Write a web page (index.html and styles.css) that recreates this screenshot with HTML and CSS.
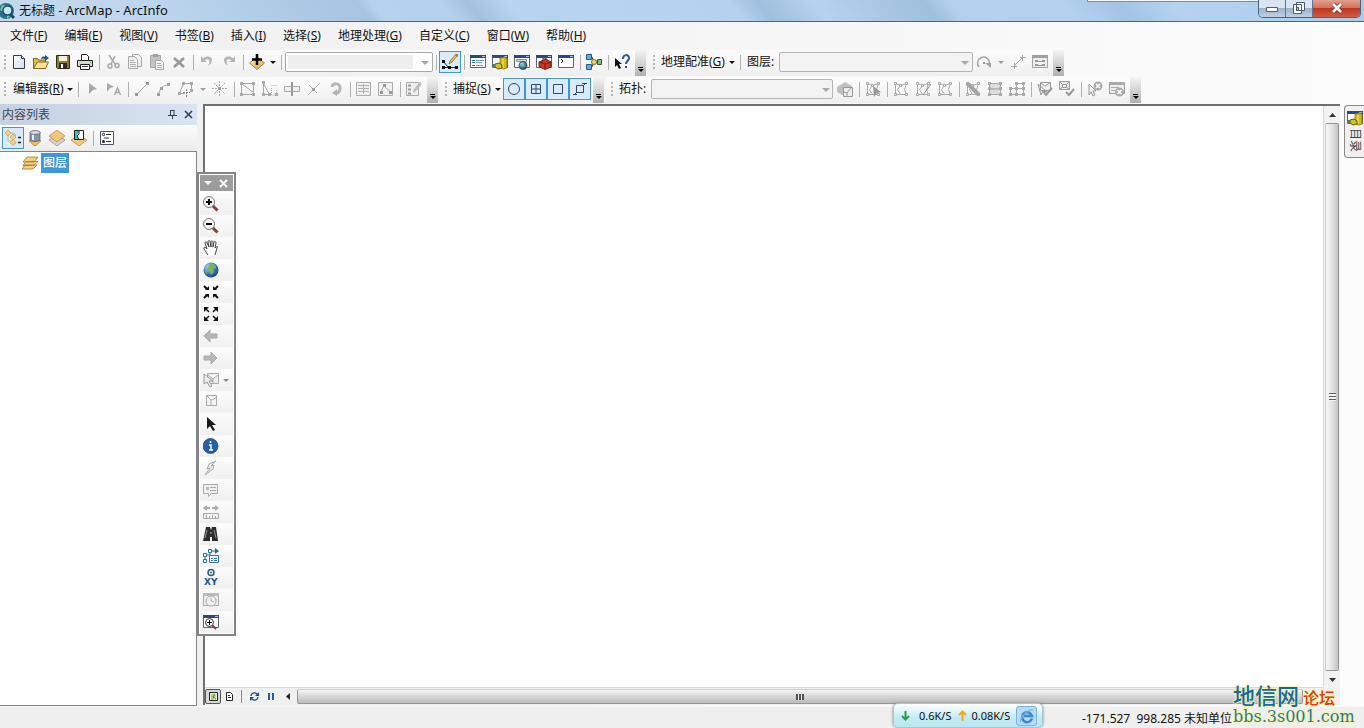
FILE: index.html
```html
<!DOCTYPE html>
<html lang="zh-CN">
<head>
<meta charset="utf-8">
<title>无标题 - ArcMap - ArcInfo</title>
<link rel="stylesheet" href="styles.css">
</head>
<body>
<svg class="sprite" aria-hidden="true">
  <defs>
    <linearGradient id="gold" x1="0" y1="0" x2="1" y2="1"><stop offset="0" stop-color="#fff3c0"/><stop offset="1" stop-color="#d9a040"/></linearGradient>
    <linearGradient id="paper" x1="0" y1="0" x2="1" y2="1"><stop offset="0" stop-color="#fff"/><stop offset="1" stop-color="#cfdcf0"/></linearGradient>
    <radialGradient id="globe" cx=".35" cy=".3" r=".8"><stop offset="0" stop-color="#b8dcf8"/><stop offset=".5" stop-color="#3f82c0"/><stop offset="1" stop-color="#123a70"/></radialGradient>
    <g id="win"><path d="M.5 1.500h15v12H.5z" fill="#fff" stroke="#5a6678"/><path d="M0 1h16v3H0z" fill="#2c4a80"/><path d="M12 2h3v1h-3z" fill="#a8c0e8"/></g>
    <g id="mesh" fill="none" stroke="#a8a8a8"><path d="M2.500 2.500l5 2 6-2M2.500 2.500v11M13.500 2.500l-2 6 2 5M2.500 13.500h11M7.500 4.500l-3 4 3 5"/><path d="M1.500 1.500h2v2h-2zM6.500 3.500h2v2h-2zM12.500 1.500h2v2h-2zM1.500 12.500h2v2h-2zM12.500 12.500h2v2h-2z" fill="#eee"/></g>
  </defs>
  <symbol id="new" viewBox="0 0 16 16"><path d="M2.500 1.500h8l3 3v10h-11z" fill="url(#paper)" stroke="#333a4c"/><path d="M10.500 1.500v3h3" fill="#fff" stroke="#333a4c"/></symbol>
  <symbol id="open" viewBox="0 0 16 16"><path d="M.5 14.500v-10h4l1 1.500h7v8.500z" fill="#e0b850" stroke="#86651c"/><path d="M.5 14.500l4-6.500h11l-3 6.500z" fill="#ffe592" stroke="#86651c"/><path d="M8 5c1-3 3-2.500 4-2V1l4 3-4 3V5c-1-.5-2-1-4 0z" fill="#1c5290"/></symbol>
  <symbol id="save" viewBox="0 0 16 16"><path d="M1.500 1.500h13v13h-12l-1-1z" fill="#8d7b36" stroke="#302b16"/><path d="M4 2h8v5H4z" fill="#f4f1dc"/><path d="M4 9h8v5H4z" fill="#2b2b2b"/><path d="M6 10h2v4H6z" fill="#fff"/></symbol>
  <symbol id="print" viewBox="0 0 16 16"><path d="M4.500 6.500v-6h5l2 2v4" fill="#fff" stroke="#222"/><path d="M.5 6.500h15v6H.5z" fill="#d6d9d2" stroke="#222"/><path d="M3.500 10.500h9v5h-9z" fill="#fff" stroke="#222"/><path d="M5 12h6v1H5z" fill="#444"/><path d="M13 8h1v1h-1z" fill="#4a4"/></symbol>
  <symbol id="cut" viewBox="0 0 16 16"><path d="M4 1l6 9M10 2l-4 8" stroke="#a8a8a8" stroke-width="1.500"/><circle cx="5" cy="12" r="2" fill="none" stroke="#a8a8a8" stroke-width="1.500"/><circle cx="12" cy="11.500" r="2" fill="none" stroke="#a8a8a8" stroke-width="1.500"/></symbol>
  <symbol id="copy" viewBox="0 0 16 16"><path d="M5.500.5h6l3 3v9h-9z" fill="#f1f1f1" stroke="#a8a8a8"/><path d="M1.500 2.500h6l3 3v9h-9z" fill="#f1f1f1" stroke="#a8a8a8"/><path d="M3 6.500h4M3 8.500h6M3 10.500h6M3 12.500h6" stroke="#b2b2b2"/></symbol>
  <symbol id="paste" viewBox="0 0 16 16"><path d="M1.500 1.500h10v12h-10z" fill="#c4c4c4" stroke="#a5a5a5"/><path d="M4 0h5v3H4z" fill="#a0a0a0"/><path d="M6.500 6.500h6l2 2v7h-8z" fill="#f4f4f4" stroke="#a5a5a5"/><path d="M8 9.500h4M8 11.500h5M8 13.500h5" stroke="#aaa"/></symbol>
  <symbol id="del" viewBox="0 0 16 16"><path d="M3 4l10 9M13 4l-10 9" stroke="#979797" stroke-width="2.500"/></symbol>
  <symbol id="undo" viewBox="0 0 16 16"><path d="M2 2v6h6L5.500 6C10 4 12 6 9 12c6-4 5-10-1-9.500C6 2.600 5 3.500 4 4.500z" fill="#b4b4b4"/></symbol>
  <symbol id="redo" viewBox="0 0 16 16"><path d="M14 2v6H8l2.500-2C6 4 4 6 7 12 1 8 2 2 8 2.500c2 .1 3 1 4 2z" fill="#b4b4b4"/></symbol>
  <symbol id="add" viewBox="0 0 16 16"><path d="M8 3l7.500 6L8 15.500.5 9z" fill="url(#gold)" stroke="#b08038"/><path d="M8 0v11M3 5.500h10" stroke="#000" stroke-width="2.500"/></symbol>
  <symbol id="edit" viewBox="0 0 16 16"><path d="M1 7l5 6M1 13.500h14" stroke="#222" fill="none"/><path d="M0 6h3v3H0zM0 12h3v3H0zM6 12h3v3H6zM13 12h3v3h-3z" fill="#111"/><path d="M7 10l1-3 6-7 2 1-6 7z" fill="#e9c259" stroke="#5b4a20" stroke-width=".6"/><path d="M13 1l2-1 1 2-1 1z" fill="#c85848"/></symbol>
  <symbol id="toc" viewBox="0 0 16 16"><use href="#win"/><path d="M2 6.500h3M2 8.500h3M2 11.500h3" stroke="#2c7aa0"/><path d="M6 6.500h8M6 8.500h6M6 11.500h7" stroke="#6a9bd0"/></symbol>
  <symbol id="catalog" viewBox="0 0 16 16"><use href="#win"/><path d="M8 4l4-1 3 1v10l-3 1-4-1z" fill="#d4b81e" stroke="#776400" stroke-width=".7"/><path d="M11 5v9" stroke="#fff07a"/><path d="M3 10l4-1 3 2v3l-4 1-3-2z" fill="#cfc13a" stroke="#5d5a10"/><path d="M1 10h2v4H1z" fill="#4b8058"/></symbol>
  <symbol id="search" viewBox="0 0 16 16"><use href="#win"/><path d="M2.500 5.500h10v2h-10z" fill="#d6dce8" stroke="#8090a8"/><circle cx="9" cy="11.500" r="4" fill="url(#globe)" stroke="#456"/><path d="M7 10l3 0 1 3-3-1z" fill="#78c070"/></symbol>
  <symbol id="toolbox" viewBox="0 0 16 16"><use href="#win"/><path d="M3 8l7-3 5 3v5l-6 2.500-6-3z" fill="#c53829" stroke="#781a14"/><path d="M3 8l6 2 6-2M9 10v5" stroke="#781a14" fill="none"/><path d="M7 6V4h3v2" stroke="#444" fill="none"/></symbol>
  <symbol id="python" viewBox="0 0 16 16"><use href="#win"/><path d="M3 5l2 2-2 2" fill="none" stroke="#111"/></symbol>
  <symbol id="model" viewBox="0 0 16 16"><path d="M4 3h2l2 5h4M4 13h2l2-5" stroke="#333" fill="none"/><path d="M.5.500h5v5h-5zM.5 10.500h5v5h-5z" fill="#5caee0" stroke="#1d5c8c"/><circle cx="8" cy="8" r="2.500" fill="#f2d860" stroke="#80701a"/><path d="M11.500 5.500h4v5h-4z" fill="#75c678" stroke="#285c2c"/></symbol>
  <symbol id="help" viewBox="0 0 16 16"><path d="M1 4v9l2-2 2 4 2-1-2-4h3z" fill="#111"/><path d="M9 5c0-5 6-5 6-1 0 3-3 3-3 6M12 12v2" fill="none" stroke="#2d5b92" stroke-width="2"/></symbol>
  <symbol id="rotate" viewBox="0 0 16 16"><path d="M3 13A6 6 0 1 1 13.500 9" fill="none" stroke="#a8a8a8" stroke-width="1.500"/><path d="M9 9h6v5z" fill="#a0a0a0"/><path d="M7 8h2v2H7z" fill="#999"/></symbol>
  <symbol id="link" viewBox="0 0 16 16"><path d="M4 12l8-8M1 12.500h6M4.500 9v6M10 3.500h6M12.500 1v6" stroke="#a6a6a6" fill="none"/></symbol>
  <symbol id="linktable" viewBox="0 0 16 16"><path d="M.5 1.500h15v12H.5z" fill="#eee" stroke="#a0a0a0"/><path d="M0 1h16v3H0z" fill="#a0a0a0"/><path d="M3 6h3v2H3zM3 10h3v2H3zM10 6h3v2h-3zM10 10h3v2h-3zM6 7h4v1H6zM6 11h4v1H6z" fill="#999"/></symbol>
  <symbol id="play" viewBox="0 0 16 16"><path d="M5 2l8 6-4 1-4 4z" fill="#a8a8a8"/></symbol>
  <symbol id="playa" viewBox="0 0 16 16"><path d="M1 2l7 4-4 1-3 4z" fill="#a8a8a8"/><path d="M8.500 14l3-7 3 7M9.500 11.500h4" fill="none" stroke="#a8a8a8" stroke-width="1.500"/></symbol>
  <symbol id="line" viewBox="0 0 16 16"><path d="M3 13l10-10" stroke="#a8a8a8"/><path d="M1 12h3v3H1zM12 1h3v3h-3z" fill="#999"/></symbol>
  <symbol id="arc" viewBox="0 0 16 16"><path d="M3 13c0-5 4-9 9-9" stroke="#a8a8a8" fill="none"/><path d="M1 12h3v3H1zM4 6h3v3H4zM11 2h3v3h-3z" fill="#a0a0a0"/></symbol>
  <symbol id="poly" viewBox="0 0 16 16"><path d="M7 12.500H1.500L5.500 2.500h8v6" stroke="#a8a8a8" fill="none"/><path d="M4 1h3v3H4zM12 1h3v3h-3zM12 8h3v3h-3zM0 11h3v3H0z" fill="#a8a8a8"/><path d="M8.500 8v8M5 11.500h7" stroke="#888" stroke-dasharray="2 1"/></symbol>
  <symbol id="burst" viewBox="0 0 16 16"><path d="M7.500 0v5M7.500 10v5M0 7.500h5M10 7.500h5M2 2l4 4M9 9l4 4M13 2L9 6M6 9l-4 4" stroke="#aaa" stroke-dasharray="2 1"/><path d="M6 6h3v3H6z" fill="#999"/></symbol>
  <symbol id="vert" viewBox="0 0 16 16"><path d="M1.500 13.500v-11l12 9v2zM1.500 2.500h12v9" stroke="#a8a8a8" fill="none"/><path d="M0 1h3v3H0zM12 1h3v3h-3zM0 12h3v3H0zM12 12h3v3h-3z" fill="#aaa"/></symbol>
  <symbol id="reshape" viewBox="0 0 16 16"><path d="M1.500 1.500v12h6l-6-11" stroke="#a8a8a8" fill="none"/><path d="M9.500 4.500h5M9.500 7v7h5v-5" stroke="#b0b0b0" fill="none" stroke-dasharray="1 1"/><path d="M0 0h3v3H0zM0 12h3v3H0zM6 12h3v3H6zM13 12h3v3h-3z" fill="#aaa"/></symbol>
  <symbol id="cutpoly" viewBox="0 0 16 16"><path d="M.5 5.500h15v5H.5z" fill="#eee" stroke="#aaa"/><path d="M8 1v14" stroke="#999" stroke-width="2"/></symbol>
  <symbol id="split" viewBox="0 0 16 16"><path d="M2 14L14 2M3 4l8 8" stroke="#aaa"/><path d="M6 7h3v3H6z" fill="#999"/></symbol>
  <symbol id="rot2" viewBox="0 0 16 16"><path d="M4 6c1-5 9-4 8 2-.5 3-2 4-4 4" fill="none" stroke="#b4b4b4" stroke-width="3"/><path d="M9 8v7l-5-3z" fill="#b4b4b4"/></symbol>
  <symbol id="attr" viewBox="0 0 16 16"><path d="M.5 1.500h14v13H.5z" fill="#f0f0f0" stroke="#aaa"/><path d="M2 4.500h11M2 7.500h11M2 10.500h11M7.500 3v10" stroke="#b0b0b0"/></symbol>
  <symbol id="sketch" viewBox="0 0 16 16"><path d="M.5 1.500h14v13H.5z" fill="#f0f0f0" stroke="#aaa"/><path d="M3 11l3-7 3 4 4 3" fill="none" stroke="#aaa"/><path d="M5 3h3v3H5zM2 10h3v3H2zM11 10h3v3h-3z" fill="#999"/></symbol>
  <symbol id="create" viewBox="0 0 16 16"><path d="M.5 1.500h12v13H.5z" fill="#f0f0f0" stroke="#aaa"/><path d="M2 4.500h3M2 8.500h3M2 12.500h3" stroke="#999" stroke-width="2"/><path d="M7 12l1-4 6-7 2 2-6 7z" fill="#bbb"/></symbol>
  <symbol id="circle" viewBox="0 0 16 16"><circle cx="8" cy="8" r="5.500" fill="none" stroke="#2d4868"/></symbol>
  <symbol id="end" viewBox="0 0 16 16"><path d="M3.500 3.500h9v9h-9zM8 4v8M4 8h8" fill="none" stroke="#2d4868"/></symbol>
  <symbol id="square" viewBox="0 0 16 16"><path d="M3.500 3.500h9v9h-9z" fill="none" stroke="#2d4868"/></symbol>
  <symbol id="edge" viewBox="0 0 16 16"><path d="M4.500 4.500h7v7h-7zM11 5l3-3M2 14l3-3M1 13.500h4M10 2.500h5" fill="none" stroke="#2d4868"/></symbol>
  <symbol id="cube" viewBox="0 0 16 16"><path d="M0 6l8-5 7 4v9H5l-5-3z" fill="#c0c0c0"/><path d="M6.500 6.500h9v9h-9z" fill="#eee" stroke="#999"/><path d="M7 11l3 1 4-5M10 12v3" stroke="#999" fill="none"/></symbol>
  <symbol id="tselect" viewBox="0 0 16 16"><use href="#mesh"/><path d="M8 5l8 6-4 1-3 4z" fill="#999"/></symbol>
  <symbol id="tmod" viewBox="0 0 16 16"><use href="#mesh"/></symbol>
  <symbol id="tshape" viewBox="0 0 16 16"><use href="#mesh"/><path d="M8 14l8-11" stroke="#888"/></symbol>
  <symbol id="tfix" viewBox="0 0 16 16"><use href="#mesh"/><path d="M2 2l12 12" stroke="#a5a5a5" stroke-width="4"/></symbol>
  <symbol id="trect" viewBox="0 0 16 16"><path d="M2.500 2.500h11v11h-11z" fill="#ddd" stroke="#aaa"/><path d="M2 8h12" stroke="#999"/><path d="M1 1h3v3H1zM12 1h3v3h-3zM1 12h3v3H1zM12 12h3v3h-3zM1 6h3v3H1zM12 6h3v3h-3z" fill="#aaa"/></symbol>
  <symbol id="tgrid" viewBox="0 0 16 16"><path d="M1.500 7.500h13v6h-13zM7.500 14V2.500h7V14" fill="none" stroke="#aaa"/><path d="M0 6h3v3H0zM6 6h3v3H6zM13 6h3v3h-3zM0 12h3v3H0zM6 12h3v3H6zM13 12h3v3h-3zM6 1h3v3H6zM13 1h3v3h-3z" fill="#aaa"/></symbol>
  <symbol id="tcheck" viewBox="0 0 16 16"><path d="M3.500 1.500h10v8h-10zM4 2l4 3 5-3M1 3l3 11 2-4 4 1z" fill="#eee" stroke="#999"/><path d="M6 10l3 4 6-7" fill="none" stroke="#999" stroke-width="2"/></symbol>
  <symbol id="tcheck2" viewBox="0 0 16 16"><path d="M.5.500h10v8H.5z" fill="#eee" stroke="#999"/><path d="M3.500 3.500h4v3h-4zM1 1l3 3M10 1L7 4M10 8L7 6M1 8l3-2" fill="none" stroke="#999"/><path d="M7 11l3 3 5-6" fill="none" stroke="#999" stroke-width="2"/></symbol>
  <symbol id="terr" viewBox="0 0 16 16"><path d="M2 3v11l2-3 2 4 2-1-2-4h3z" fill="#eee" stroke="#999"/><circle cx="11" cy="5" r="4.500" fill="#aaa"/><path d="M9 3l4 4M13 3L9 7" stroke="#fff" stroke-width="1.500"/></symbol>
  <symbol id="tinsp" viewBox="0 0 16 16"><path d="M.5 1.500h15v11H.5z" fill="#eee" stroke="#999"/><path d="M0 1h16v3H0z" fill="#aaa"/><path d="M2 6.500h8M2 9.500h4" stroke="#aaa"/><circle cx="10.500" cy="11" r="4.500" fill="#aaa"/><path d="M8.500 9l4 4M12.500 9l-4 4" stroke="#fff" stroke-width="1.500"/></symbol>
  <symbol id="draworder" viewBox="0 0 16 16"><path d="M3 5v6h3M5 3h4l2 3M8 7v6h3" stroke="#b8b8b8" fill="none"/><path d="M3 0l3 3-3 3-3-3zM8 4l3 3-3 3-3-3zM8 9.500l3 3-3 3-3-3z" fill="#f5cf82" stroke="#c89540" stroke-width=".7"/><path d="M13 7.500h3M13 12.500h3" stroke="#222" stroke-width="1.500"/></symbol>
  <symbol id="source" viewBox="0 0 16 16"><path d="M8 8l6 3-6 5-6-5z" fill="#ecc260" stroke="#b88a38"/><path d="M3 2v8c2 2 8 2 10 0V2z" fill="#8794a8" stroke="#4c566a" stroke-width=".7"/><path d="M5 3v7h2V3z" fill="#e9eef8"/><ellipse cx="8" cy="2.500" rx="5" ry="2" fill="#d4dcea" stroke="#4c566a" stroke-width=".7"/></symbol>
  <symbol id="visible" viewBox="0 0 16 16"><path d="M8 5l8 5-8 6-8-6z" fill="#d4d4d4" stroke="#888" stroke-width=".7"/><path d="M8 0l8 6-8 6-8-6z" fill="#f2c878" stroke="#b08038" stroke-width=".7"/></symbol>
  <symbol id="selection" viewBox="0 0 16 16"><path d="M8 5l8 5-8 6-8-6z" fill="#f2c878" stroke="#b08038" stroke-width=".7"/><path d="M3.500.5h9v9h-9z" fill="#35bdd2" stroke="#222"/><path d="M8 1h4v8H8l-2-3z" fill="#fff"/><path d="M8 1v3L6 6l2 3" fill="none" stroke="#222"/></symbol>
  <symbol id="options" viewBox="0 0 16 16"><path d="M1.500 1.500h13v13h-13z" fill="#fff" stroke="#4b5265"/><circle cx="4.500" cy="4.500" r="1.200" fill="none" stroke="#222"/><circle cx="4.500" cy="11.500" r="1.500" fill="#223"/><path d="M7 4.500h5M7 11.500h5M5 8h5" stroke="#333"/></symbol>
  <symbol id="layers" viewBox="0 0 16 16"><path d="M0 14l3-4h12l-4 4zM1 10.500l3-4h12l-4 4zM1 7l4-5h11l-4 5z" fill="#f3cf7e" stroke="#a27830" stroke-width=".8"/></symbol>
  <symbol id="zin" viewBox="0 0 16 16"><path d="M9.500 9.500l5 5" stroke="#84403c" stroke-width="3"/><circle cx="6" cy="6" r="5.500" fill="#f4f6fa" stroke="#777"/><path d="M6 3v6M3 6h6" stroke="#000" stroke-width="2"/></symbol>
  <symbol id="zout" viewBox="0 0 16 16"><path d="M9.500 9.500l5 5" stroke="#84403c" stroke-width="3"/><circle cx="6" cy="6" r="5.500" fill="#f4f6fa" stroke="#777"/><path d="M3 6h6" stroke="#000" stroke-width="2"/></symbol>
  <symbol id="pan" viewBox="0 0 16 16"><path d="M5 15L1 9c-1-2 1-2 2-1l1 1L2 3c0-1 2-2 2 0l2 4-1-5c0-2 2-2 2 0l1 5V2c0-2 2-1 2 0v5l1-5c0-1 2-1 2 1l-1 5c2-2 3-2 2 0l-2 7" fill="#fff" stroke="#333" stroke-width=".9"/></symbol>
  <symbol id="full" viewBox="0 0 16 16"><circle cx="8" cy="8" r="7.500" fill="url(#globe)"/><path d="M7 2c3-1 6 1 6 4l-3 1 1 3-3 3-1-4-3-2zM2 8l2 1v3c-1-1-2-2-2-4z" fill="#7db35d"/></symbol>
  <symbol id="fzi" viewBox="0 0 16 16"><path d="M1 2l3 3M15 2l-3 3M1 14l3-3M15 14l-3-3" stroke="#111" stroke-width="2"/><path d="M6 2v4H2zM10 2v4h4zM6 14v-4H2zM10 14v-4h4z" fill="#111"/></symbol>
  <symbol id="fzo" viewBox="0 0 16 16"><path d="M2 2l4 4M14 2l-4 4M2 14l4-4M14 14l-4-4" stroke="#111" stroke-width="1.500"/><path d="M1 1h5L1 6zM15 1h-5l5 5zM1 15h5l-5-5zM15 15h-5l5-5z" fill="#111"/></symbol>
  <symbol id="back" viewBox="0 0 16 16"><path d="M1 8l6-6v4h7v4H7v4z" fill="#b8b8b8" stroke="#aaa"/></symbol>
  <symbol id="fwd" viewBox="0 0 16 16"><path d="M14 8L8 2v4H1v4h7v4z" fill="#b8b8b8" stroke="#aaa"/></symbol>
  <symbol id="selfeat" viewBox="0 0 16 16"><path d="M4.500 1.500h11v10h-11zM5 3l5 4 5-4M10 7v5" fill="#eee" stroke="#aaa"/><path d="M1 2v10l3-2 3 5 2-1-3-5h4z" fill="#eee" stroke="#999"/></symbol>
  <symbol id="clear" viewBox="0 0 16 16"><path d="M3.500 1.500h10v10h-10zM4 2l4 4 5-2M8 6v5" fill="#f2f2f2" stroke="#aaa"/></symbol>
  <symbol id="pointer" viewBox="0 0 16 16"><path d="M4 1v12l3-3 3 5 2-1-3-5h4z" fill="#181818"/></symbol>
  <symbol id="info" viewBox="0 0 16 16"><circle cx="7.500" cy="8" r="7.500" fill="#2460a4" stroke="#164078" stroke-width=".7"/><path d="M7.500 3v2M6 7h2v5M6 12h4" stroke="#fff" stroke-width="1.500" fill="none"/></symbol>
  <symbol id="bolt" viewBox="0 0 16 16"><path d="M13 1L6 4 4 9l3-1-5 7 8-6 1-4-3 1z" fill="#e8e8e8" stroke="#aaa"/></symbol>
  <symbol id="html" viewBox="0 0 16 16"><path d="M.5 2.500h14v9h-6l-3 3v-3h-5z" fill="#f0f0f0" stroke="#aaa"/><path d="M3 5h3v3H3z" fill="#bbb"/><path d="M7 5.500h6M7 8.500h6" stroke="#aaa"/></symbol>
  <symbol id="measure" viewBox="0 0 16 16"><path d="M0 4l4-3v2h3v2H4v2zM16 4l-4-3v2H9v2h3v2z" fill="#aaa"/><path d="M.5 9.500h15v5H.5z" fill="#f2f2f2" stroke="#aaa"/><path d="M3.500 11v3M6.500 12v2M9.500 11v3M12.500 12v2" stroke="#aaa"/></symbol>
  <symbol id="find" viewBox="0 0 16 16"><path d="M3 1h4l1 3 1-3h4l2 14H9v-4H7v4H0z" fill="#2c2c2c"/><path d="M4 4L2 12M11 4l2 8" stroke="#999"/><path d="M7 6h2v2H7z" fill="#777"/></symbol>
  <symbol id="route" viewBox="0 0 16 16"><path d="M2 13V7h5V3h6" fill="none" stroke="#246b94"/><path d="M12 0l4 3-4 3z" fill="#246b94"/><path d="M.5 5.500h3v3h-3zM5.500 1.500h3v3h-3zM.5 11.500h3v3h-3z" fill="#fff" stroke="#246b94"/><path d="M6.500 7.500h9v7h-9z" fill="#eef7fa" stroke="#37768f"/><path d="M8 10.500h2M11 10.500h3M8 12.500h2M11 12.500h3" stroke="#37768f"/></symbol>
  <symbol id="xy" viewBox="0 0 16 16"><circle cx="8" cy="3.500" r="3" fill="#fff" stroke="#22598c" stroke-width="1.500"/><circle cx="8" cy="3.500" r="1" fill="#22598c"/></symbol>
  <symbol id="time" viewBox="0 0 16 16"><path d="M.5 1.500h15v12H.5z" fill="#eee" stroke="#aaa"/><path d="M0 1h16v3H0z" fill="#bbb"/><circle cx="8" cy="9" r="5" fill="#f2f2f2" stroke="#aaa"/><path d="M8 6v3l3 1" fill="none" stroke="#aaa"/></symbol>
  <symbol id="viewer" viewBox="0 0 16 16"><use href="#win"/><path d="M9 11l4 4" stroke="#84403c" stroke-width="2"/><circle cx="6.500" cy="8.500" r="4" fill="#fff" stroke="#333"/><path d="M6.500 6v5M4 8.500h5" stroke="#111"/></symbol>
  <symbol id="app" viewBox="0 0 16 16"><circle cx="6" cy="8" r="8" fill="#28728a"/><path d="M2 2l5 1 1 4-4 2-4-2zM7 11l3 2-3 3z" fill="#7ac6a0"/><path d="M10 11l4 4" stroke="#26485c" stroke-width="3"/><circle cx="7.500" cy="7.500" r="4.500" fill="#c0ebf5" stroke="#264b66" stroke-width="1.500"/></symbol>
</svg>

<header class="titlebar">
  <svg class="icon"><use href="#app"/></svg>
  <h1 class="titlebar__text">无标题 <span class="titlebar__app">- ArcMap - ArcInfo</span></h1>
  <div class="titlebar__tab"></div>
  <div class="winctl">
    <button class="winctl__btn" aria-label="最小化"><svg class="winctl__icon" viewBox="0 0 14 12"><path d="M1.500 5.500h11v4h-11z" fill="#fff" stroke="#555e70"/></svg></button>
    <button class="winctl__btn" aria-label="还原"><svg class="winctl__icon" viewBox="0 0 14 12"><path d="M4.500.5h8v8h-8zM1.500 2.500h8v9h-8z" fill="#fff" stroke="#4d586b"/><path d="M4.500 5.500h2v3h-2z" fill="#a9bdd4" stroke="#4d586b"/></svg></button>
    <button class="winctl__btn winctl__btn--close" aria-label="关闭"><svg class="winctl__icon" viewBox="0 0 14 12"><path d="M3 2l8 8M11 2l-8 8" stroke="#6b3630" stroke-width="4.500"/><path d="M3 2l8 8M11 2l-8 8" stroke="#fff" stroke-width="2.800"/></svg></button>
  </div>
</header>

<nav class="menubar">
  <button class="menubar__item">文件(<u>F</u>)</button>
  <button class="menubar__item">编辑(<u>E</u>)</button>
  <button class="menubar__item">视图(<u>V</u>)</button>
  <button class="menubar__item">书签(<u>B</u>)</button>
  <button class="menubar__item">插入(<u>I</u>)</button>
  <button class="menubar__item">选择(<u>S</u>)</button>
  <button class="menubar__item">地理处理(<u>G</u>)</button>
  <button class="menubar__item">自定义(<u>C</u>)</button>
  <button class="menubar__item">窗口(<u>W</u>)</button>
  <button class="menubar__item">帮助(<u>H</u>)</button>
</nav>

<div class="toolrow">
  <div class="toolbar" role="toolbar" aria-label="标准工具">
    <span class="grip"></span>
    <button class="tool" aria-label="新建"><svg class="icon"><use href="#new"/></svg></button>
    <button class="tool" aria-label="打开"><svg class="icon"><use href="#open"/></svg></button>
    <button class="tool" aria-label="保存"><svg class="icon"><use href="#save"/></svg></button>
    <button class="tool" aria-label="打印"><svg class="icon"><use href="#print"/></svg></button>
    <span class="sep"></span>
    <button class="tool" aria-label="剪切"><svg class="icon"><use href="#cut"/></svg></button>
    <button class="tool" aria-label="复制"><svg class="icon"><use href="#copy"/></svg></button>
    <button class="tool" aria-label="粘贴"><svg class="icon"><use href="#paste"/></svg></button>
    <button class="tool" aria-label="删除"><svg class="icon"><use href="#del"/></svg></button>
    <span class="sep"></span>
    <button class="tool" aria-label="撤消"><svg class="icon"><use href="#undo"/></svg></button>
    <button class="tool" aria-label="恢复"><svg class="icon"><use href="#redo"/></svg></button>
    <span class="sep"></span>
    <button class="tool" aria-label="添加数据"><svg class="icon"><use href="#add"/></svg></button>
    <button class="drop" aria-label="添加数据选项"></button>
    <span class="sep"></span>
    <span class="combo combo--scale"><select class="combo__select" aria-label="比例尺"></select></span>
    <span class="sep"></span>
    <button class="tool tool--on" aria-label="编辑器工具条"><svg class="icon"><use href="#edit"/></svg></button>
    <span class="sep"></span>
    <button class="tool" aria-label="内容列表窗口"><svg class="icon"><use href="#toc"/></svg></button>
    <button class="tool" aria-label="目录窗口"><svg class="icon"><use href="#catalog"/></svg></button>
    <button class="tool" aria-label="搜索窗口"><svg class="icon"><use href="#search"/></svg></button>
    <button class="tool" aria-label="工具箱窗口"><svg class="icon"><use href="#toolbox"/></svg></button>
    <button class="tool" aria-label="Python 窗口"><svg class="icon"><use href="#python"/></svg></button>
    <span class="sep"></span>
    <button class="tool" aria-label="模型构建器"><svg class="icon"><use href="#model"/></svg></button>
    <span class="sep"></span>
    <button class="tool" aria-label="这是什么"><svg class="icon"><use href="#help"/></svg></button>
    <button class="overflow" aria-label="工具条选项"></button>
  </div>
  <div class="toolbar" role="toolbar" aria-label="地理配准">
    <span class="grip"></span>
    <button class="textbtn textbtn--georef">地理配准(<u>G</u>)</button>
    <span class="drop"></span>
    <span class="sep"></span>
    <label class="caption" for="georef-layer">图层:</label>
    <span class="combo combo--layer"><select class="combo__select" id="georef-layer" disabled></select></span>
    <button class="tool" aria-label="旋转"><svg class="icon"><use href="#rotate"/></svg></button>
    <button class="drop drop--off" aria-label="旋转选项"></button>
    <button class="tool" aria-label="添加控制点"><svg class="icon"><use href="#link"/></svg></button>
    <button class="tool" aria-label="查看链接表"><svg class="icon"><use href="#linktable"/></svg></button>
    <button class="overflow" aria-label="工具条选项"></button>
  </div>
</div>

<div class="toolrow">
  <div class="toolbar" role="toolbar" aria-label="编辑器">
    <span class="grip"></span>
    <button class="textbtn textbtn--editor">编辑器(<u>R</u>)</button>
    <span class="drop"></span>
    <span class="sep"></span>
    <button class="tool" aria-label="编辑工具"><svg class="icon"><use href="#play"/></svg></button>
    <button class="tool" aria-label="编辑注记"><svg class="icon"><use href="#playa"/></svg></button>
    <span class="sep"></span>
    <button class="tool" aria-label="直线段"><svg class="icon"><use href="#line"/></svg></button>
    <button class="tool" aria-label="弧段"><svg class="icon"><use href="#arc"/></svg></button>
    <button class="tool" aria-label="追踪"><svg class="icon"><use href="#poly"/></svg></button>
    <button class="drop drop--off" aria-label="追踪选项"></button>
    <button class="tool" aria-label="点"><svg class="icon"><use href="#burst"/></svg></button>
    <span class="sep"></span>
    <button class="tool" aria-label="编辑折点"><svg class="icon"><use href="#vert"/></svg></button>
    <button class="tool" aria-label="整形要素"><svg class="icon"><use href="#reshape"/></svg></button>
    <button class="tool" aria-label="裁剪面"><svg class="icon"><use href="#cutpoly"/></svg></button>
    <button class="tool" aria-label="分割"><svg class="icon"><use href="#split"/></svg></button>
    <button class="tool" aria-label="旋转要素"><svg class="icon"><use href="#rot2"/></svg></button>
    <span class="sep"></span>
    <button class="tool" aria-label="属性"><svg class="icon"><use href="#attr"/></svg></button>
    <button class="tool" aria-label="草图属性"><svg class="icon"><use href="#sketch"/></svg></button>
    <span class="sep"></span>
    <button class="tool" aria-label="创建要素"><svg class="icon"><use href="#create"/></svg></button>
    <button class="overflow" aria-label="工具条选项"></button>
  </div>
  <div class="toolbar" role="toolbar" aria-label="捕捉">
    <span class="grip"></span>
    <button class="textbtn textbtn--snap">捕捉(<u>S</u>)</button>
    <span class="drop"></span>
    <button class="tool tool--on" aria-label="点捕捉"><svg class="icon"><use href="#circle"/></svg></button>
    <button class="tool tool--on" aria-label="端点捕捉"><svg class="icon"><use href="#end"/></svg></button>
    <button class="tool tool--on" aria-label="折点捕捉"><svg class="icon"><use href="#square"/></svg></button>
    <button class="tool tool--on" aria-label="边捕捉"><svg class="icon"><use href="#edge"/></svg></button>
    <button class="overflow" aria-label="工具条选项"></button>
  </div>
  <div class="toolbar" role="toolbar" aria-label="拓扑">
    <span class="grip"></span>
    <label class="caption" for="topology">拓扑:</label>
    <span class="combo combo--topo"><select class="combo__select" id="topology" disabled></select></span>
    <button class="tool" aria-label="地图拓扑"><svg class="icon"><use href="#cube"/></svg></button>
    <span class="sep"></span>
    <button class="tool" aria-label="拓扑编辑"><svg class="icon"><use href="#tselect"/></svg></button>
    <span class="sep"></span>
    <button class="tool" aria-label="修改边"><svg class="icon"><use href="#tmod"/></svg></button>
    <button class="tool" aria-label="整形边"><svg class="icon"><use href="#tshape"/></svg></button>
    <button class="tool" aria-label="对齐边"><svg class="icon"><use href="#tmod"/></svg></button>
    <span class="sep"></span>
    <button class="tool" aria-label="构造要素"><svg class="icon"><use href="#tfix"/></svg></button>
    <button class="tool" aria-label="构造面"><svg class="icon"><use href="#trect"/></svg></button>
    <button class="tool" aria-label="打断线"><svg class="icon"><use href="#tgrid"/></svg></button>
    <span class="sep"></span>
    <button class="tool" aria-label="验证指定区域"><svg class="icon"><use href="#tcheck"/></svg></button>
    <button class="tool" aria-label="验证当前范围"><svg class="icon"><use href="#tcheck2"/></svg></button>
    <span class="sep"></span>
    <button class="tool" aria-label="修复拓扑错误"><svg class="icon"><use href="#terr"/></svg></button>
    <button class="tool" aria-label="错误检查器"><svg class="icon"><use href="#tinsp"/></svg></button>
    <button class="overflow" aria-label="工具条选项"></button>
  </div>
</div>

<main class="workspace">
  <aside class="toc">
    <header class="toc__head">
      <h2 class="toc__title">内容列表</h2>
      <button class="toc__headbtn" aria-label="自动隐藏"><svg viewBox="0 0 9 9" class="mini"><path d="M2.500 0v5M6 0v5M2 .5h4M0 5.500h9M4.500 6v3" stroke="#333b4a" fill="none"/></svg></button>
      <button class="toc__headbtn" aria-label="关闭"><svg viewBox="0 0 9 9" class="mini"><path d="M1 1l7 7M8 1L1 8" stroke="#333b4a" stroke-width="1.500"/></svg></button>
    </header>
    <div class="toc__tools">
      <button class="tool tool--on" aria-label="按绘制顺序列出"><svg class="icon"><use href="#draworder"/></svg></button>
      <button class="tool" aria-label="按源列出"><svg class="icon"><use href="#source"/></svg></button>
      <button class="tool" aria-label="按可见性列出"><svg class="icon"><use href="#visible"/></svg></button>
      <button class="tool" aria-label="按选择列出"><svg class="icon"><use href="#selection"/></svg></button>
      <span class="sep"></span>
      <button class="tool" aria-label="选项"><svg class="icon"><use href="#options"/></svg></button>
    </div>
    <ul class="tree">
      <li class="tree__item"><svg class="icon"><use href="#layers"/></svg><span class="tree__label">图层</span></li>
    </ul>
  </aside>

  <section class="view">
    <div class="view__row">
      <div class="map"></div>
      <div class="vscroll">
        <button class="scrollbtn" aria-label="向上滚动"><svg viewBox="0 0 7 4" class="tri"><path d="M0 4l3.500-4L7 4z" fill="#333"/></svg></button>
        <div class="vscroll__thumb"><i class="bars"></i></div>
        <button class="scrollbtn" aria-label="向下滚动"><svg viewBox="0 0 7 4" class="tri"><path d="M0 0l3.500 4L7 0z" fill="#333"/></svg></button>
      </div>
    </div>
    <div class="hbar">
      <button class="viewbtn viewbtn--on" aria-label="数据视图"><svg viewBox="0 0 9 9" class="mini"><path d="M.5.5h8v8h-8z" fill="#e5f2d8" stroke="#222"/><path d="M2 2h3l2 2-3 4H2z" fill="#a9d27a"/><path d="M6 2l-2 3 3 2" fill="none" stroke="#4d7a38"/></svg></button>
      <button class="viewbtn" aria-label="布局视图"><svg viewBox="0 0 9 9" class="mini"><path d="M1.500.5h4l2 2v6h-6z" fill="#fff" stroke="#222"/><path d="M3 3.500h2M3 5.500h3" stroke="#222"/></svg></button>
      <span class="hbar__sep"></span>
      <button class="hbar__btn" aria-label="刷新视图"><svg viewBox="0 0 9 9" class="mini"><path d="M1 4c0-3 4-4 6-2M8 5c0 3-4 4-6 2" fill="none" stroke="#1c4c80" stroke-width="1.300"/><path d="M9 0v4H5zM0 9V5h4z" fill="#1c4c80"/></svg></button>
      <button class="hbar__btn" aria-label="暂停绘制"><svg viewBox="0 0 9 9" class="mini"><path d="M1 1h2v7H1zM5 1h2v7H5z" fill="#2a5a9c"/></svg></button>
      <button class="hbar__btn" aria-label="向左滚动"><svg viewBox="0 0 9 9" class="mini"><path d="M6 1v7L2 4.500z" fill="#222"/></svg></button>
      <div class="hbar__thumb"><i class="bars bars--h"></i></div>
      <button class="hbar__end" aria-label="向右滚动"><svg viewBox="0 0 9 9" class="mini"><path d="M3 1v7l4-3.500z" fill="#222"/></svg></button>
    </div>
  </section>

  <aside class="dock">
    <button class="dock__tab"><svg class="icon"><use href="#catalog"/></svg><span class="dock__text">目录</span></button>
  </aside>
</main>

<footer class="status"><span class="status__coords">-171.527&nbsp; 998.285 未知单位</span></footer>

<div class="palette" role="toolbar" aria-label="工具">
  <div class="palette__head">
    <svg viewBox="0 0 8 4" class="palette__tri"><path d="M0 0h8L4 4z" fill="#fff"/></svg>
    <button class="palette__close" aria-label="关闭"><svg viewBox="0 0 9 9" class="mini"><path d="M1 1l7 7M8 1L1 8" stroke="#fff" stroke-width="2"/></svg></button>
  </div>
  <button class="palette__tool" aria-label="放大"><svg class="icon"><use href="#zin"/></svg></button>
  <button class="palette__tool" aria-label="缩小"><svg class="icon"><use href="#zout"/></svg></button>
  <button class="palette__tool" aria-label="平移"><svg class="icon"><use href="#pan"/></svg></button>
  <button class="palette__tool" aria-label="全图"><svg class="icon"><use href="#full"/></svg></button>
  <button class="palette__tool" aria-label="固定比例放大"><svg class="icon"><use href="#fzi"/></svg></button>
  <button class="palette__tool" aria-label="固定比例缩小"><svg class="icon"><use href="#fzo"/></svg></button>
  <button class="palette__tool" aria-label="后退"><svg class="icon"><use href="#back"/></svg></button>
  <button class="palette__tool" aria-label="前进"><svg class="icon"><use href="#fwd"/></svg></button>
  <button class="palette__tool palette__tool--drop" aria-label="选择要素"><svg class="icon"><use href="#selfeat"/></svg></button>
  <button class="palette__tool" aria-label="清除所选"><svg class="icon"><use href="#clear"/></svg></button>
  <button class="palette__tool" aria-label="选择元素"><svg class="icon"><use href="#pointer"/></svg></button>
  <button class="palette__tool" aria-label="识别"><svg class="icon"><use href="#info"/></svg></button>
  <button class="palette__tool" aria-label="超链接"><svg class="icon"><use href="#bolt"/></svg></button>
  <button class="palette__tool" aria-label="HTML 弹出窗口"><svg class="icon"><use href="#html"/></svg></button>
  <button class="palette__tool" aria-label="测量"><svg class="icon"><use href="#measure"/></svg></button>
  <button class="palette__tool" aria-label="查找"><svg class="icon"><use href="#find"/></svg></button>
  <button class="palette__tool" aria-label="查找路径"><svg class="icon"><use href="#route"/></svg></button>
  <button class="palette__tool palette__tool--xy" aria-label="转到 XY"><svg class="palette__dot" viewBox="4 0 8 8"><use href="#xy" width="16" height="16"/></svg><b class="palette__xy">XY</b></button>
  <button class="palette__tool" aria-label="时间滑块"><svg class="icon"><use href="#time"/></svg></button>
  <button class="palette__tool" aria-label="查看器窗口"><svg class="icon"><use href="#viewer"/></svg></button>
</div>

<div class="netmeter">
  <svg viewBox="0 0 9 11" class="netmeter__arrow"><path d="M4.500 1v8M1 6l3.500 3.500L8 6" fill="none" stroke="#2f9a44" stroke-width="2"/></svg>
  <span class="netmeter__rate">0.6K/S</span>
  <svg viewBox="0 0 9 11" class="netmeter__arrow"><path d="M4.500 2v9M1 5l3.500-3.500L8 5" fill="none" stroke="#e8a828" stroke-width="2"/></svg>
  <span>0.08K/S</span>
  <button class="netmeter__ie" aria-label="浏览器"><svg viewBox="0 0 16 16" class="icon"><path d="M13 10.500A5 5 0 1 1 13 8H5" fill="none" stroke="#3b86cc" stroke-width="2.500"/><path d="M2 14C-1 12 8 1 14 2" fill="none" stroke="#73b4e6" stroke-width="1.300"/></svg></button>
</div>

<div class="brand">
  <div class="brand__top"><span class="brand__name">地信网</span><span class="brand__forum">论坛</span></div>
  <div class="brand__url">bbs.3s001.com</div>
</div>
</body>
</html>
```

FILE: styles.css
```css
* { box-sizing: border-box; }

body {
  margin: 0;
  height: 100vh;
  display: flex;
  flex-direction: column;
  position: relative;
  overflow: hidden;
  background: linear-gradient(90deg, #efefef, #f4f4f4 40%, #fcfcfc);
  color: #111;
  font: 12px/16px "Noto Sans", "Noto Sans CJK SC", sans-serif;
}

button {
  margin: 0;
  padding: 0;
  border: 0;
  background: none;
  color: inherit;
  font: inherit;
  flex: none;
}

h1, h2, ul { margin: 0; padding: 0; font: inherit; list-style: none; }

.sprite { position: absolute; width: 0; height: 0; }
.icon { display: block; width: 16px; height: 16px; flex: none; }
.mini { display: block; width: 9px; height: 9px; }

/* title bar */
.titlebar {
  flex: none;
  display: flex;
  align-items: center;
  gap: 3px;
  height: 22px;
  position: relative;
  padding-right: 3px;
  border-bottom: 1px solid #4e6484;
  background: linear-gradient(50deg, #c4d9ee 0, #bdd5ed 12%, #b3cee9 18%, #a7c4e0 27%, #b6d2ee 28%, #b3d0ec 33%, #a4c2df 35%, #b7d4f0 38%, #b4d1ee 54%, #9fbfde 56%, #b5d2ee 60%, #a0bfdd 68%, #b4d2ee 70%, #b3d1ee 78%, #a3c4e2 82%, #b5d3ef 86%, #a9cbe8);
}
.titlebar__text { flex: 1; }
.titlebar__app { font-size: 13px; }
.titlebar__tab {
  position: absolute;
  top: 0;
  right: 7px;
  width: 270px;
  height: 2px;
  background: #f6f9fb;
  border: 1px solid #7b8ca0;
  border-top: 0;
}
.winctl {
  position: relative;
  align-self: flex-start;
  display: flex;
  height: 18px;
  border: 1px solid #4f6078;
  border-top: 0;
  border-radius: 0 0 5px 5px;
  overflow: hidden;
}
.winctl__btn {
  display: flex;
  align-items: center;
  justify-content: center;
  width: 27px;
  padding-bottom: 1px;
  border-right: 1px solid #63758d;
  background: linear-gradient(#d9e5f2 45%, #9db2cb 50%, #bdd0e4);
}
.winctl__btn--close { width: 47px; border: 0; background: linear-gradient(#e0a08f 0, #d4735c 45%, #bd3722 50%, #cf5c40); }
.winctl__icon { width: 14px; height: 12px; }

/* menu */
.menubar { flex: none; display: flex; align-items: center; gap: 17px; height: 28px; padding-left: 10px; }

/* tool bars */
.toolrow { flex: none; display: flex; gap: 3px; height: 27px; }
.toolbar { display: flex; align-items: center; height: 26px; padding-bottom: 2px; background: linear-gradient(#fcfcfc, #efefef); }
.grip {
  flex: none;
  width: 2px;
  height: 15px;
  margin: 0 2px 0 4px;
  background: repeating-linear-gradient(#b2b2b2 0 2px, transparent 2px 4px);
}
.tool { display: flex; align-items: center; justify-content: center; width: 22px; height: 22px; }
.tool--on { border: 1px solid #4196cc; background: #d9ebf9; }
.sep { flex: none; width: 6px; height: 15px; background: linear-gradient(#b0b0b0, #b0b0b0) 3px 0 / 1px 100% no-repeat; }
.drop { flex: none; width: 10px; height: 16px; display: flex; align-items: center; justify-content: center; }
.drop::after { content: ""; border: 3px solid transparent; border-top-color: #111; border-bottom: 0; }
.drop--off { width: 12px; }
.drop--off::after { border-top-color: #a0a0a0; }
.textbtn { text-align: left; white-space: nowrap; }
.textbtn--georef { width: 70px; padding-left: 4px; }
.textbtn--editor { width: 57px; padding-left: 5px; }
.textbtn--snap { width: 44px; padding-left: 4px; }
.caption { flex: none; width: 36px; padding-left: 4px; white-space: nowrap; }
.combo { position: relative; display: flex; height: 20px; flex: none; }
.combo::after {
  content: "";
  position: absolute;
  right: 4px;
  top: 9px;
  border: 4px solid transparent;
  border-top-color: #a8a8a8;
  border-bottom: 0;
}
.combo__select {
  appearance: none;
  width: 100%;
  margin: 0;
  border: 1px solid #b4b4b4;
  border-radius: 2px;
  background: #f3f3f3;
  opacity: 1;
}
.combo--scale { width: 149px; padding-left: 1px; }
.combo--scale .combo__select { border-color: #a8a8a8; background: linear-gradient(#eee, #eee) 2px 2px / 125px 14px no-repeat #fff; }
.combo--layer { width: 194px; }
.combo--topo { width: 183px; padding-right: 1px; }
.overflow {
  align-self: flex-start;
  width: 11px;
  height: 26px;
  margin-left: 2px;
  display: flex;
  flex-direction: column;
  align-items: center;
  justify-content: flex-end;
  gap: 1px;
  padding-bottom: 4px;
  background: linear-gradient(#f4f4f4, #d4d4d4 50%, #b0b0b0);
}
.overflow::before { content: ""; width: 5px; height: 1px; background: #000; }
.overflow::after { content: ""; border: 3px solid transparent; border-top-color: #000; border-bottom: 0; }

/* work area */
.workspace { flex: 1; min-height: 0; display: flex; }

.toc { flex: none; width: 197px; margin-right: 6px; display: flex; flex-direction: column; }
.toc__head {
  display: flex;
  align-items: center;
  gap: 7px;
  height: 21px;
  padding: 0 4px 0 2px;
  background: linear-gradient(90deg, #c5d1e0, #d7e4f2);
  color: #3b4658;
}
.toc__title { flex: 1; }
.toc__tools { display: flex; align-items: center; height: 26px; padding-left: 2px; background: linear-gradient(#fbfbfb, #ececec); }
.tree { flex: 1; border: 1px solid #858585; border-left: 0; background: #fff; padding-top: 1px; }
.tree__item { display: flex; align-items: center; gap: 3px; padding-left: 22px; }
.tree__label { padding: 2px; background: #3d95e4; color: #fff; font-weight: 500; }

.view { flex: 1; min-width: 0; display: flex; flex-direction: column; border: solid #707070; border-width: 2px 0 0 2px; margin-bottom: 1px; }
.view__row { flex: 1; min-height: 0; display: flex; }
.map { flex: 1; background: #fff; border-right: 1px solid #d8d8d8; border-bottom: 1px solid #d8d8d8; }
.vscroll { flex: none; width: 16px; display: flex; flex-direction: column; padding: 0 1px; background: #f2f2f2; }
.scrollbtn { display: flex; align-items: center; justify-content: center; height: 17px; }
.tri { width: 7px; height: 4px; }
.vscroll__thumb {
  flex: 1;
  display: flex;
  align-items: center;
  justify-content: center;
  border: 1px solid #959595;
  border-left-color: #c8c8c8;
  border-radius: 2px;
  background: linear-gradient(90deg, #f7f7f7, #e4e4e4 50%, #c4c4c4);
}
.bars { width: 7px; height: 8px; background: repeating-linear-gradient(#606060 0 1px, #f4f4f4 1px 3px); }
.bars--h { width: 8px; height: 6px; background: repeating-linear-gradient(90deg, #505050 0 2px, #eee 2px 3px); }
.hbar { flex: none; display: flex; align-items: center; height: 17px; padding-right: 20px; background: #f0f0f0; }
.viewbtn { display: flex; align-items: center; justify-content: center; width: 16px; height: 15px; }
.viewbtn--on { border: 1px solid #555; border-radius: 2px; background: #d8d8d8; }
.hbar__sep { width: 1px; height: 13px; margin: 0 4px; background: #888; }
.hbar__btn { display: flex; align-items: center; justify-content: center; width: 17px; height: 15px; }
.hbar__thumb {
  flex: 1;
  height: 15px;
  display: flex;
  align-items: center;
  justify-content: center;
  border: 1px solid #959595;
  border-top-color: #d0d0d0;
  border-radius: 2px;
  background: linear-gradient(#f4f4f4, #d6d6d6 50%, #bcbcbc);
}
.hbar__end { width: 17px; display: flex; align-items: center; justify-content: center; }

.dock { flex: none; width: 24px; padding: 1px 0 0 4px; }
.dock__tab {
  display: flex;
  flex-direction: column;
  align-items: center;
  gap: 2px;
  width: 20px;
  height: 53px;
  padding-top: 4px;
  border: 1px solid #8a8a8a;
  border-right: 0;
  border-radius: 4px 0 0 4px;
  background: #f0f0f0;
  color: #444;
}
.dock__text { writing-mode: vertical-rl; text-orientation: sideways; line-height: 16px; }

.status { flex: none; display: flex; justify-content: flex-end; height: 22px; padding: 4px 132px 0 0; border-top: 1px solid #f8f8f8; background: #efefef; white-space: nowrap; }

/* floating tool palette */
.palette {
  position: absolute;
  left: 197px;
  top: 172px;
  width: 39px;
  padding: 1px;
  border: 2px solid #858585;
  background: #fff;
}
.palette__head { display: flex; align-items: center; justify-content: space-between; height: 16px; margin-bottom: 2px; padding: 0 5px 0 4px; background: #9c9c9c; }
.palette__tri { width: 8px; height: 4px; }
.palette__tool {
  display: flex;
  align-items: center;
  width: 100%;
  height: 22px;
  padding-left: 3px;
  background: linear-gradient(#fcfcfc, #f0f0f0);
}
.palette__tool--drop { gap: 4px; }
.palette__tool--drop::after { content: ""; border: 3px solid transparent; border-top-color: #888; border-bottom: 0; }
.palette__tool--xy { flex-direction: column; align-items: flex-start; padding-top: 2px; }
.palette__dot { width: 8px; height: 8px; margin-left: 4px; }
.palette__xy { font: bold 9px/10px "DejaVu Sans", sans-serif; color: #22598c; padding-left: 1px; }

/* network speed widget */
.netmeter {
  position: absolute;
  right: 321px;
  bottom: 0;
  width: 150px;
  height: 25px;
  display: flex;
  align-items: center;
  gap: 4px;
  padding: 0 5px 0 7px;
  border: 1px solid #a3c9d8;
  border-radius: 5px;
  background: linear-gradient(#fff, #c3ebf4 60%, #b8e6f1);
  box-shadow: 0 0 3px #888;
  font-size: 11px;
  white-space: nowrap;
}
.netmeter__arrow { width: 9px; height: 11px; flex: none; }
.netmeter__rate { margin: 0 3px 0 5px; }
.netmeter__ie { display: flex; align-items: center; justify-content: center; width: 21px; height: 20px; margin-left: auto; border: 1px solid #7eb2d8; border-radius: 3px; background: #b5dbf5; }

/* site mark */
.brand {
  position: absolute;
  right: 4px;
  bottom: 2px;
  width: 127px;
  text-shadow: 1px 0 1px #f5f5a0, -1px 0 1px #f5f5a0, 0 1px 1px #f5f5a0, 0 -1px 1px #f5f5a0;
  white-space: nowrap;
}
.brand__top { display: flex; align-items: flex-end; gap: 4px; height: 20px; }
.brand__name { font: 500 22px/22px "Liberation Serif", "Noto Sans CJK SC", serif; color: #1467a8; }
.brand__forum { font: 500 16px/18px "Liberation Serif", "Noto Sans CJK SC", serif; color: #e03818; }
.brand__url { font: 16px/18px "DejaVu Serif", serif; color: #2a78a0; }
```
